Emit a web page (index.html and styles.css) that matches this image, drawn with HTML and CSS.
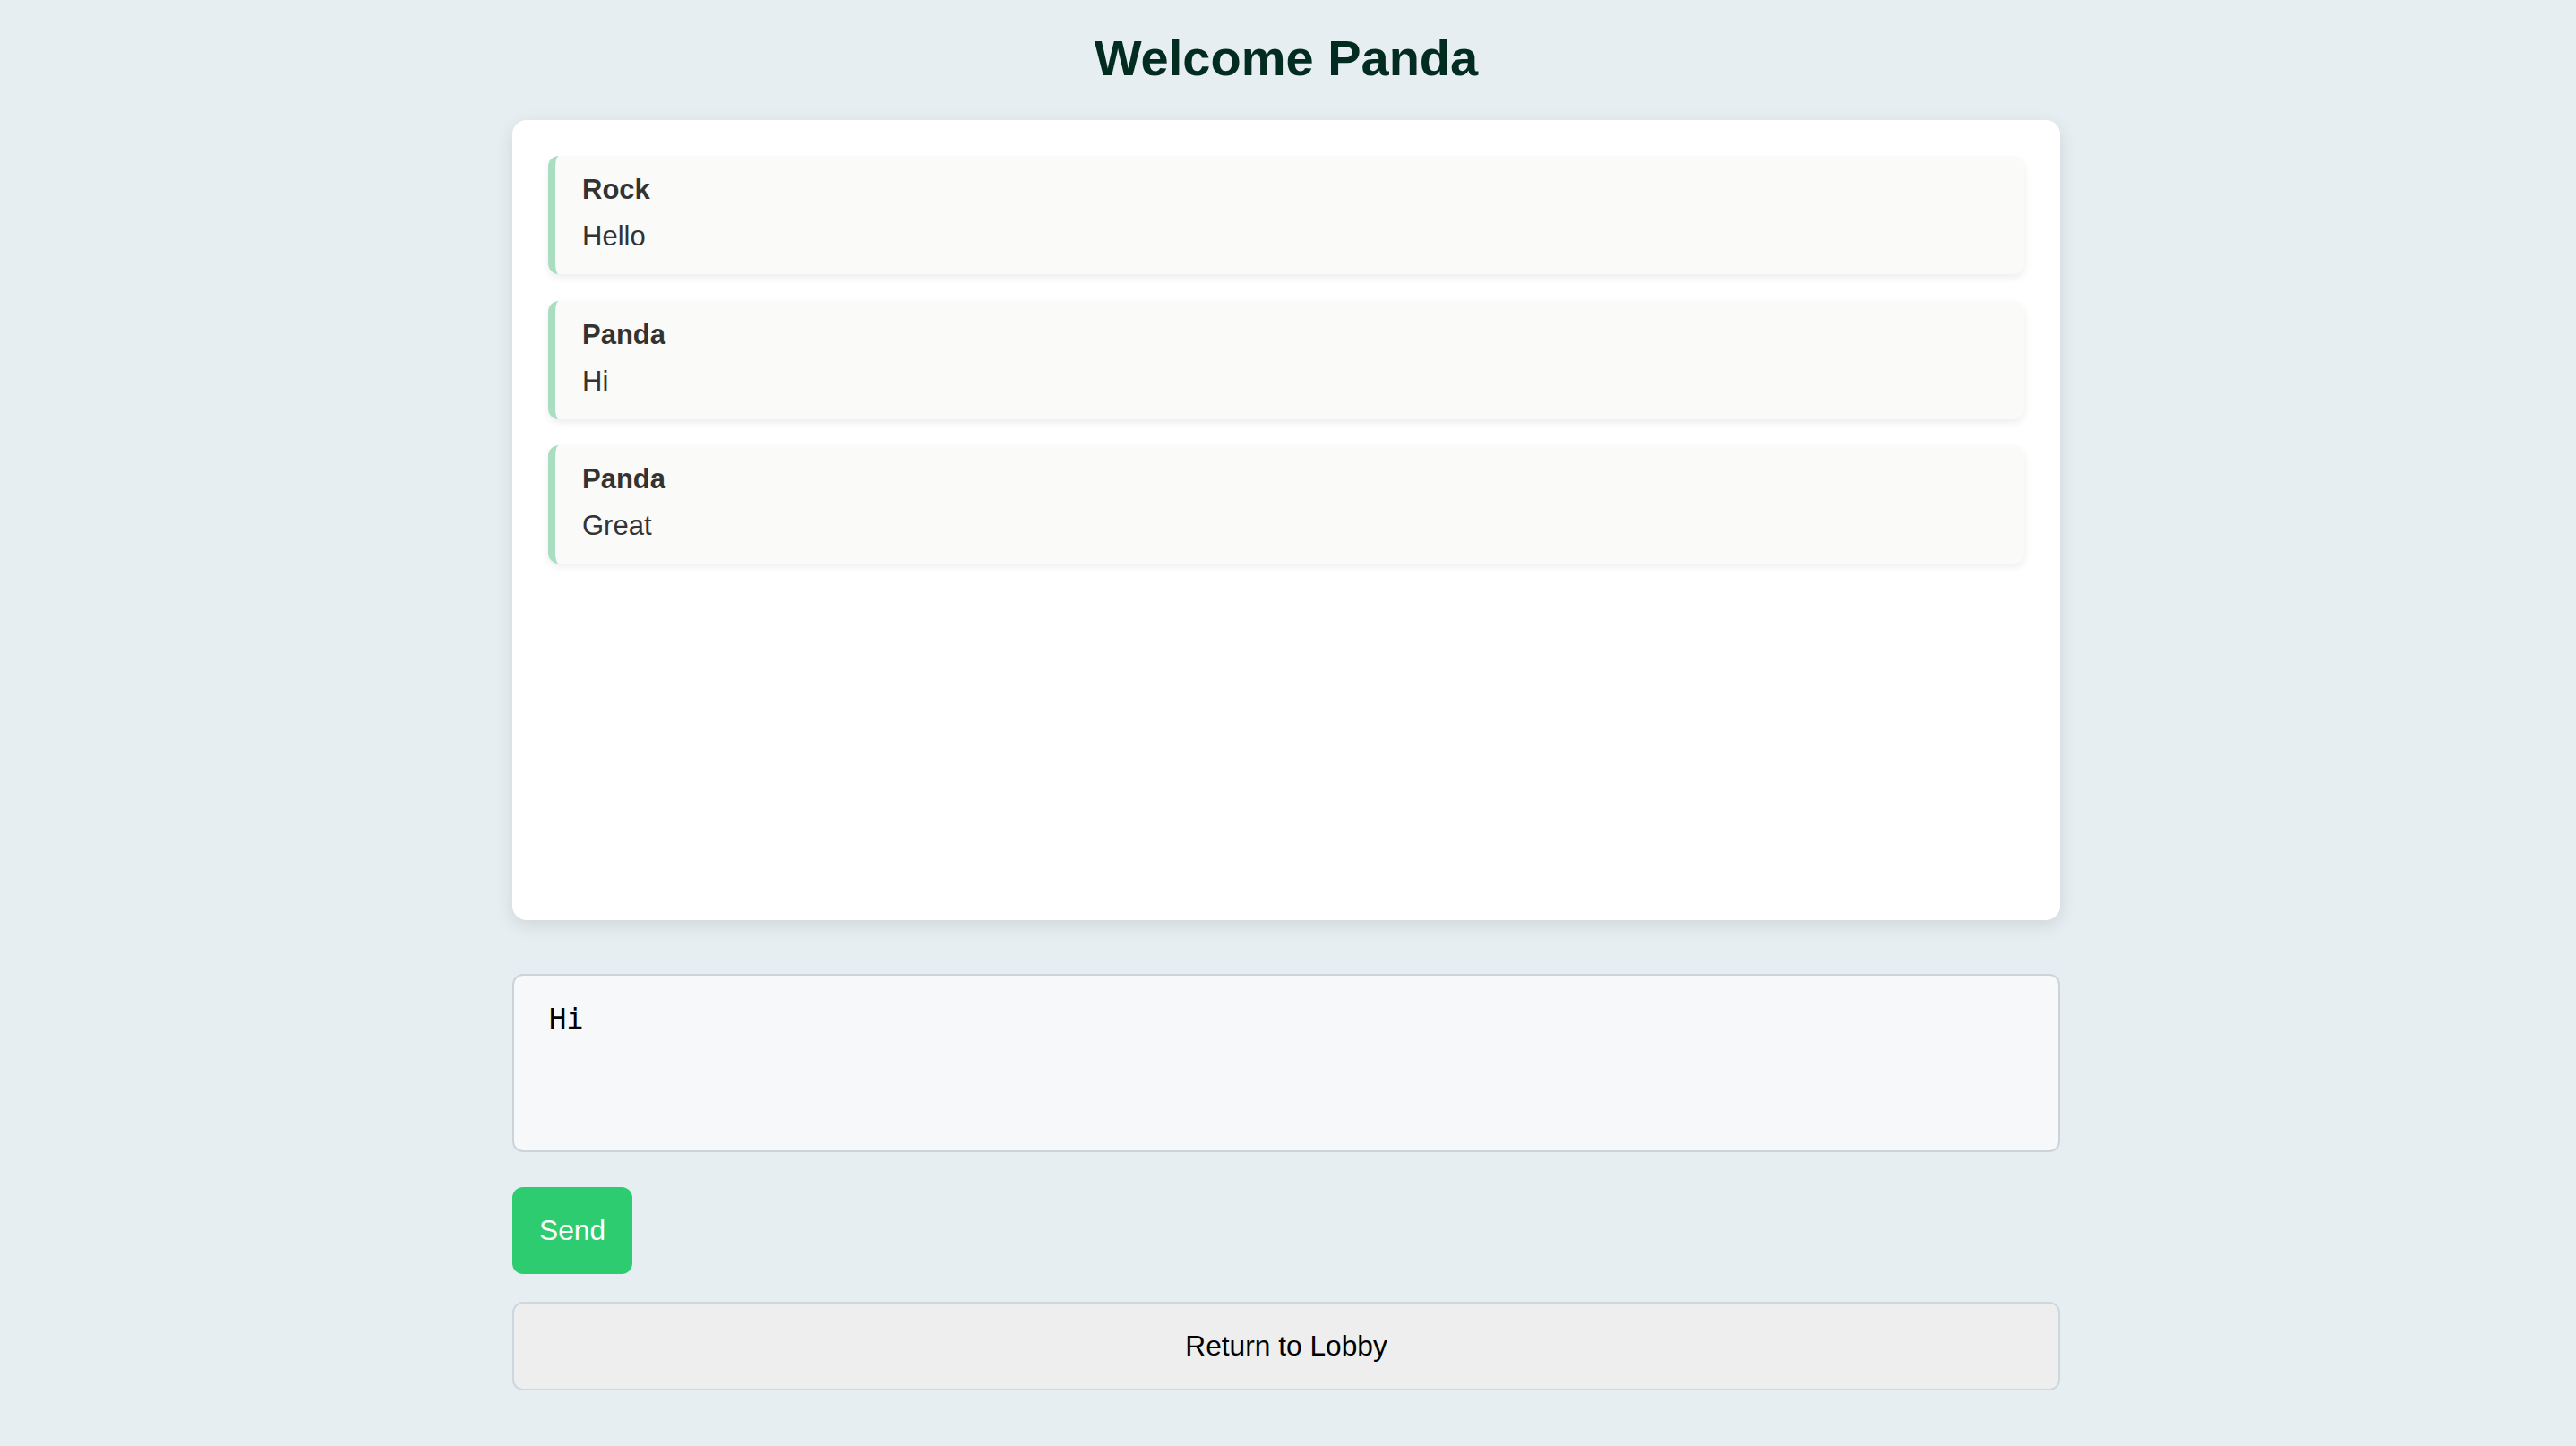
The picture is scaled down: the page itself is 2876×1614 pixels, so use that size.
FILE: index.html
```html
<!DOCTYPE html>
<html lang="en">
<head>
<meta charset="utf-8">
<title>Chat Room</title>
<link rel="stylesheet" href="styles.css">
</head>
<body>
<main class="page">
  <h1 class="title">Welcome Panda</h1>
  <section class="chat">
    <div class="msg">
      <div class="msg-name">Rock</div>
      <div class="msg-text">Hello</div>
    </div>
    <div class="msg">
      <div class="msg-name">Panda</div>
      <div class="msg-text">Hi</div>
    </div>
    <div class="msg">
      <div class="msg-name">Panda</div>
      <div class="msg-text">Great</div>
    </div>
  </section>
  <textarea class="input">Hi</textarea>
  <div class="actions">
    <button class="btn-send">Send</button>
  </div>
  <button class="btn-lobby">Return to Lobby</button>
</main>
</body>
</html>
```

FILE: styles.css
```css
html, body {
  margin: 0;
  padding: 0;
}
body {
  background: #e6eef1;
  font-family: "Liberation Sans", Arial, Helvetica, sans-serif;
  min-height: 1614px;
  padding-right: 4px;
  box-sizing: border-box;
}
.page {
  width: 1728px;
  margin: 0 auto;
  padding-top: 33px;
  display: flex;
  flex-direction: column;
}
.title {
  margin: 0;
  text-align: center;
  font-size: 56px;
  line-height: 64px;
  font-weight: 700;
  color: #032c20;
}
.chat {
  margin-top: 37px;
  box-sizing: border-box;
  height: 893px;
  background: #ffffff;
  border-radius: 16px;
  padding: 40px 40px;
  box-shadow: 0 6px 20px rgba(0, 0, 0, 0.1);
  display: flex;
  flex-direction: column;
  gap: 29.5px;
}
.msg {
  background: #fafaf9;
  border-left: 8px solid #a9dec1;
  border-radius: 12px;
  padding: 14px 32px 18px 30px;
  box-shadow: 0 4px 8px rgba(0, 0, 0, 0.07);
  color: #333333;
  font-size: 31px;
  line-height: 48px;
}
.msg-name {
  font-weight: 700;
  margin-bottom: 4px;
}
.input {
  margin-top: 60px;
  box-sizing: border-box;
  width: 100%;
  height: 199px;
  background: #f7f8fa;
  border: 2px solid #ccd3da;
  border-radius: 12px;
  padding: 29px 39px;
  font-family: "DejaVu Sans Mono", "Liberation Mono", monospace;
  font-size: 32px;
  color: #000000;
  resize: none;
  outline: none;
  display: block;
}
.actions {
  margin-top: 39px;
  display: flex;
}
.btn-send {
  background: #2ecc71;
  color: #ffffff;
  border: none;
  border-radius: 12px;
  padding: 30px 30px;
  font-family: "Liberation Sans", Arial, sans-serif;
  font-size: 31.7px;
  line-height: normal;
  cursor: pointer;
}
.btn-lobby {
  margin-top: 31px;
  width: 100%;
  background: #eeeeee;
  color: #000000;
  border: 2px solid #cdd7de;
  border-radius: 12px;
  padding: 29px 20px;
  font-family: "Liberation Sans", Arial, sans-serif;
  font-size: 31.7px;
  line-height: normal;
  cursor: pointer;
}
```
